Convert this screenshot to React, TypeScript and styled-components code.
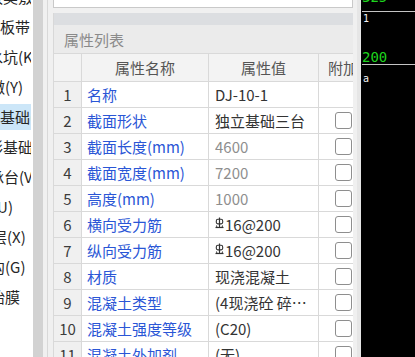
import React from "react";
import styled, { createGlobalStyle } from "styled-components";

const Global = createGlobalStyle`
  html, body { margin: 0; padding: 0; background: #ffffff; overflow: hidden; }
  body { font-family: "Noto Sans CJK SC", "Noto Sans", sans-serif; }
`;

const Screen = styled.div`
  display: flex;
  width: 415px;
  height: 357px;
  overflow: hidden;
`;

const Tree = styled.div`
  width: 33px;
  flex: none;
  background: #ffffff;
  padding-right: 2px;
  box-sizing: border-box;
  display: flex;
  flex-direction: column;
`;

const TreeList = styled.div`
  overflow: hidden;
  display: flex;
  flex-direction: column;
  margin-top: -18px;
`;

const TreeRow = styled.div`
  height: 30px;
  flex: none;
  display: flex;
  align-items: center;
  white-space: nowrap;
  overflow: hidden;
`;

const TreeLabel = styled.span<{ $shift: number; $active?: boolean }>`
  display: block;
  margin-left: ${(p) => p.$shift}px;
  padding-right: 40px;
  height: 26px;
  line-height: 26px;
  font-size: 15px;
  color: #262626;
  background: ${(p) => (p.$active ? "#cce6f8" : "transparent")};
`;

const Splitter = styled.div`
  width: 10px;
  flex: none;
  background: #d2d2d2;
`;

const Middle = styled.div`
  width: 314px;
  flex: none;
  background: #f0f0f0;
  display: flex;
  padding-left: 4px;
  box-sizing: border-box;
`;

const PanelFrame = styled.div`
  flex: 1;
  border-left: 1px solid #d8d8d8;
  padding-left: 5px;
  padding-right: 4px;
  display: flex;
  flex-direction: column;
  min-width: 0;
`;

const Content = styled.div`
  width: 300px;
  display: flex;
  flex-direction: column;
  overflow: hidden;
  height: 357px;
`;

const TopBox = styled.div`
  height: 7px;
  flex: none;
  background: #ffffff;
  border: 1px solid #c9c9c9;
  border-top: none;
  box-sizing: content-box;
  margin-bottom: 5px;
`;

const TitleBox = styled.div`
  flex: none;
  height: 40px;
  display: flex;
  flex-direction: column;
  border-left: 1px solid #d8d8d8;
`;

const TitleStrip = styled.div`
  height: 12px;
  background: #dcdee1;
`;

const TitleText = styled.div`
  flex: 1;
  background: #ebebeb;
  display: flex;
  align-items: center;
  padding-left: 10px;
  font-size: 15px;
  color: #8a8a8a;
`;

const Table = styled.div`
  width: 306px;
  border-top: 1px solid #d9d9d9;
  border-left: 1px solid #d9d9d9;
  background: #ffffff;
`;

const Row = styled.div<{ $head?: boolean }>`
  display: grid;
  grid-template-columns: 28px 127px 110px 40px;
  height: ${(p) => (p.$head ? 28 : 26)}px;
  background: ${(p) => (p.$head ? "#f3f3f3" : "#ffffff")};
`;

type Kind = "idx" | "name" | "value" | "attach" | "head" | "headIdx" | "headAttach";

const Cell = styled.div<{ $kind: Kind; $muted?: boolean }>`
  box-sizing: border-box;
  border-right: 1px solid #d9d9d9;
  border-bottom: 1px solid #d9d9d9;
  display: flex;
  align-items: center;
  font-size: 15px;
  white-space: nowrap;
  overflow: hidden;
  min-width: 0;
  ${(p) =>
    p.$kind === "idx"
      ? `justify-content: center; background: #f0f0f0; color: #3c3c3c;`
      : p.$kind === "name"
      ? `padding-left: 5px; color: #2a56d6;`
      : p.$kind === "value"
      ? `padding-left: 6px; padding-right: 1px; color: ${p.$muted ? "#8e8e8e" : "#333333"};`
      : p.$kind === "attach"
      ? `padding-left: 16px;`
      : p.$kind === "head"
      ? `justify-content: center; color: #555555;`
      : p.$kind === "headAttach"
      ? `padding-left: 9px; color: #555555;`
      : `background: #f3f3f3;`}
`;

const ValueText = styled.span`
  display: block;
  overflow: hidden;
  text-overflow: ellipsis;
  white-space: nowrap;
  width: 100%;
`;

const CheckBox = styled.div`
  width: 17px;
  height: 17px;
  box-sizing: border-box;
  border: 1.5px solid #8e8e8e;
  border-radius: 3px;
  background: #ffffff;
  flex: none;
`;

const RightStrip = styled.div`
  width: 4px;
  flex: none;
  background: #e6e6e6;
`;

const Dark = styled.div`
  width: 58px;
  flex: none;
  background: #000000;
  display: flex;
  flex-direction: column;
  font-family: "DejaVu Sans Mono", "Liberation Mono", monospace;
`;

const DarkCell = styled.div<{ $h: number }>`
  height: ${(p) => p.$h}px;
  flex: none;
  overflow: hidden;
  display: flex;
  flex-direction: column;
  justify-content: space-between;
  padding-left: 1px;
`;

const DarkLine = styled.div`
  height: 1px;
  flex: none;
  background: #c4c4c4;
  margin-left: 1px;
`;

const Green = styled.span<{ $size: number; $offset?: number }>`
  color: #1ed41e;
  font-size: ${(p) => p.$size}px;
  line-height: 1;
  margin-top: ${(p) => p.$offset ?? 0}px;
`;

const White = styled.span<{ $size: number; $top: number }>`
  color: #f2f2f2;
  font-size: ${(p) => p.$size}px;
  line-height: 1;
  margin-top: ${(p) => p.$top}px;
  margin-left: 1px;
`;

const Rebar = () => (
  <svg width="9" height="13" viewBox="0 0 9 13" style={{ marginRight: 1, marginBottom: 3, flex: "none" }}>
    <path d="M4.5 0.5 V11" stroke="#333" strokeWidth="1.2" fill="none" />
    <rect x="1.3" y="2.3" width="6.4" height="4.6" rx="1.6" stroke="#333" strokeWidth="1.1" fill="none" />
    <path d="M0.5 10.5 H8.5" stroke="#333" strokeWidth="1.2" />
    <path d="M1.5 8.5 L2 10.5 M7.5 8.5 L7 10.5" stroke="#333" strokeWidth="1" />
  </svg>
);

const treeItems: { text: string; shift: number; active?: boolean }[] = [
  { text: "筏板类敷", shift: -27 },
  { text: "基础板带(W)", shift: -30 },
  { text: "集水坑(K)", shift: -27 },
  { text: "柱墩(Y)", shift: -25 },
  { text: "独立基础(D)", shift: -30, active: true },
  { text: "条形基础(T)", shift: -27 },
  { text: "桩承台(V)", shift: -26 },
  { text: "桩(U)", shift: -23 },
  { text: "垫层(X)", shift: -23 },
  { text: "地沟(G)", shift: -25 },
  { text: "砖胎膜", shift: -25 },
];

type Prop = { name: string; value: React.ReactNode; muted?: boolean; check: boolean };

const rebar = (
  <>
    <Rebar />
    16@200
  </>
);

const props: Prop[] = [
  { name: "名称", value: "DJ-10-1", check: false },
  { name: "截面形状", value: "独立基础三台", check: true },
  { name: "截面长度(mm)", value: "4600", muted: true, check: true },
  { name: "截面宽度(mm)", value: "7200", muted: true, check: true },
  { name: "高度(mm)", value: "1000", muted: true, check: true },
  { name: "横向受力筋", value: rebar, check: true },
  { name: "纵向受力筋", value: rebar, check: true },
  { name: "材质", value: "现浇混凝土", check: true },
  { name: "混凝土类型", value: "(4现浇砼 碎石<20>)", check: true },
  { name: "混凝土强度等级", value: "(C20)", check: true },
  { name: "混凝土外加剂", value: "(无)", check: true },
];

export default function App() {
  return (
    <>
      <Global />
      <Screen>
        <Tree>
          <TreeList>
            {treeItems.map((t, i) => (
              <TreeRow key={i}>
                <TreeLabel $shift={t.shift} $active={t.active}>
                  {t.text}
                </TreeLabel>
              </TreeRow>
            ))}
          </TreeList>
        </Tree>
        <Splitter />
        <Middle>
          <PanelFrame>
            <Content>
              <TopBox />
              <TitleBox>
                <TitleStrip />
                <TitleText>属性列表</TitleText>
              </TitleBox>
              <Table>
                <Row $head>
                  <Cell $kind="headIdx" />
                  <Cell $kind="head">属性名称</Cell>
                  <Cell $kind="head">属性值</Cell>
                  <Cell $kind="headAttach">附加</Cell>
                </Row>
                {props.map((p, i) => (
                  <Row key={i}>
                    <Cell $kind="idx">{i + 1}</Cell>
                    <Cell $kind="name">{p.name}</Cell>
                    <Cell $kind="value" $muted={p.muted}>
                      {typeof p.value === "string" ? <ValueText>{p.value}</ValueText> : p.value}
                    </Cell>
                    <Cell $kind="attach">{p.check && <CheckBox />}</Cell>
                  </Row>
                ))}
              </Table>
            </Content>
          </PanelFrame>
        </Middle>
        <RightStrip />
        <Dark>
          <DarkCell $h={11}>
            <Green $size={14} $offset={-10}>325</Green>
          </DarkCell>
          <DarkLine />
          <DarkCell $h={52}>
            <White $size={10} $top={2}>1</White>
            <Green $size={14} $offset={0}>200</Green>
          </DarkCell>
          <DarkLine />
          <DarkCell $h={40}>
            <White $size={10} $top={9}>a</White>
          </DarkCell>
        </Dark>
      </Screen>
    </>
  );
}
